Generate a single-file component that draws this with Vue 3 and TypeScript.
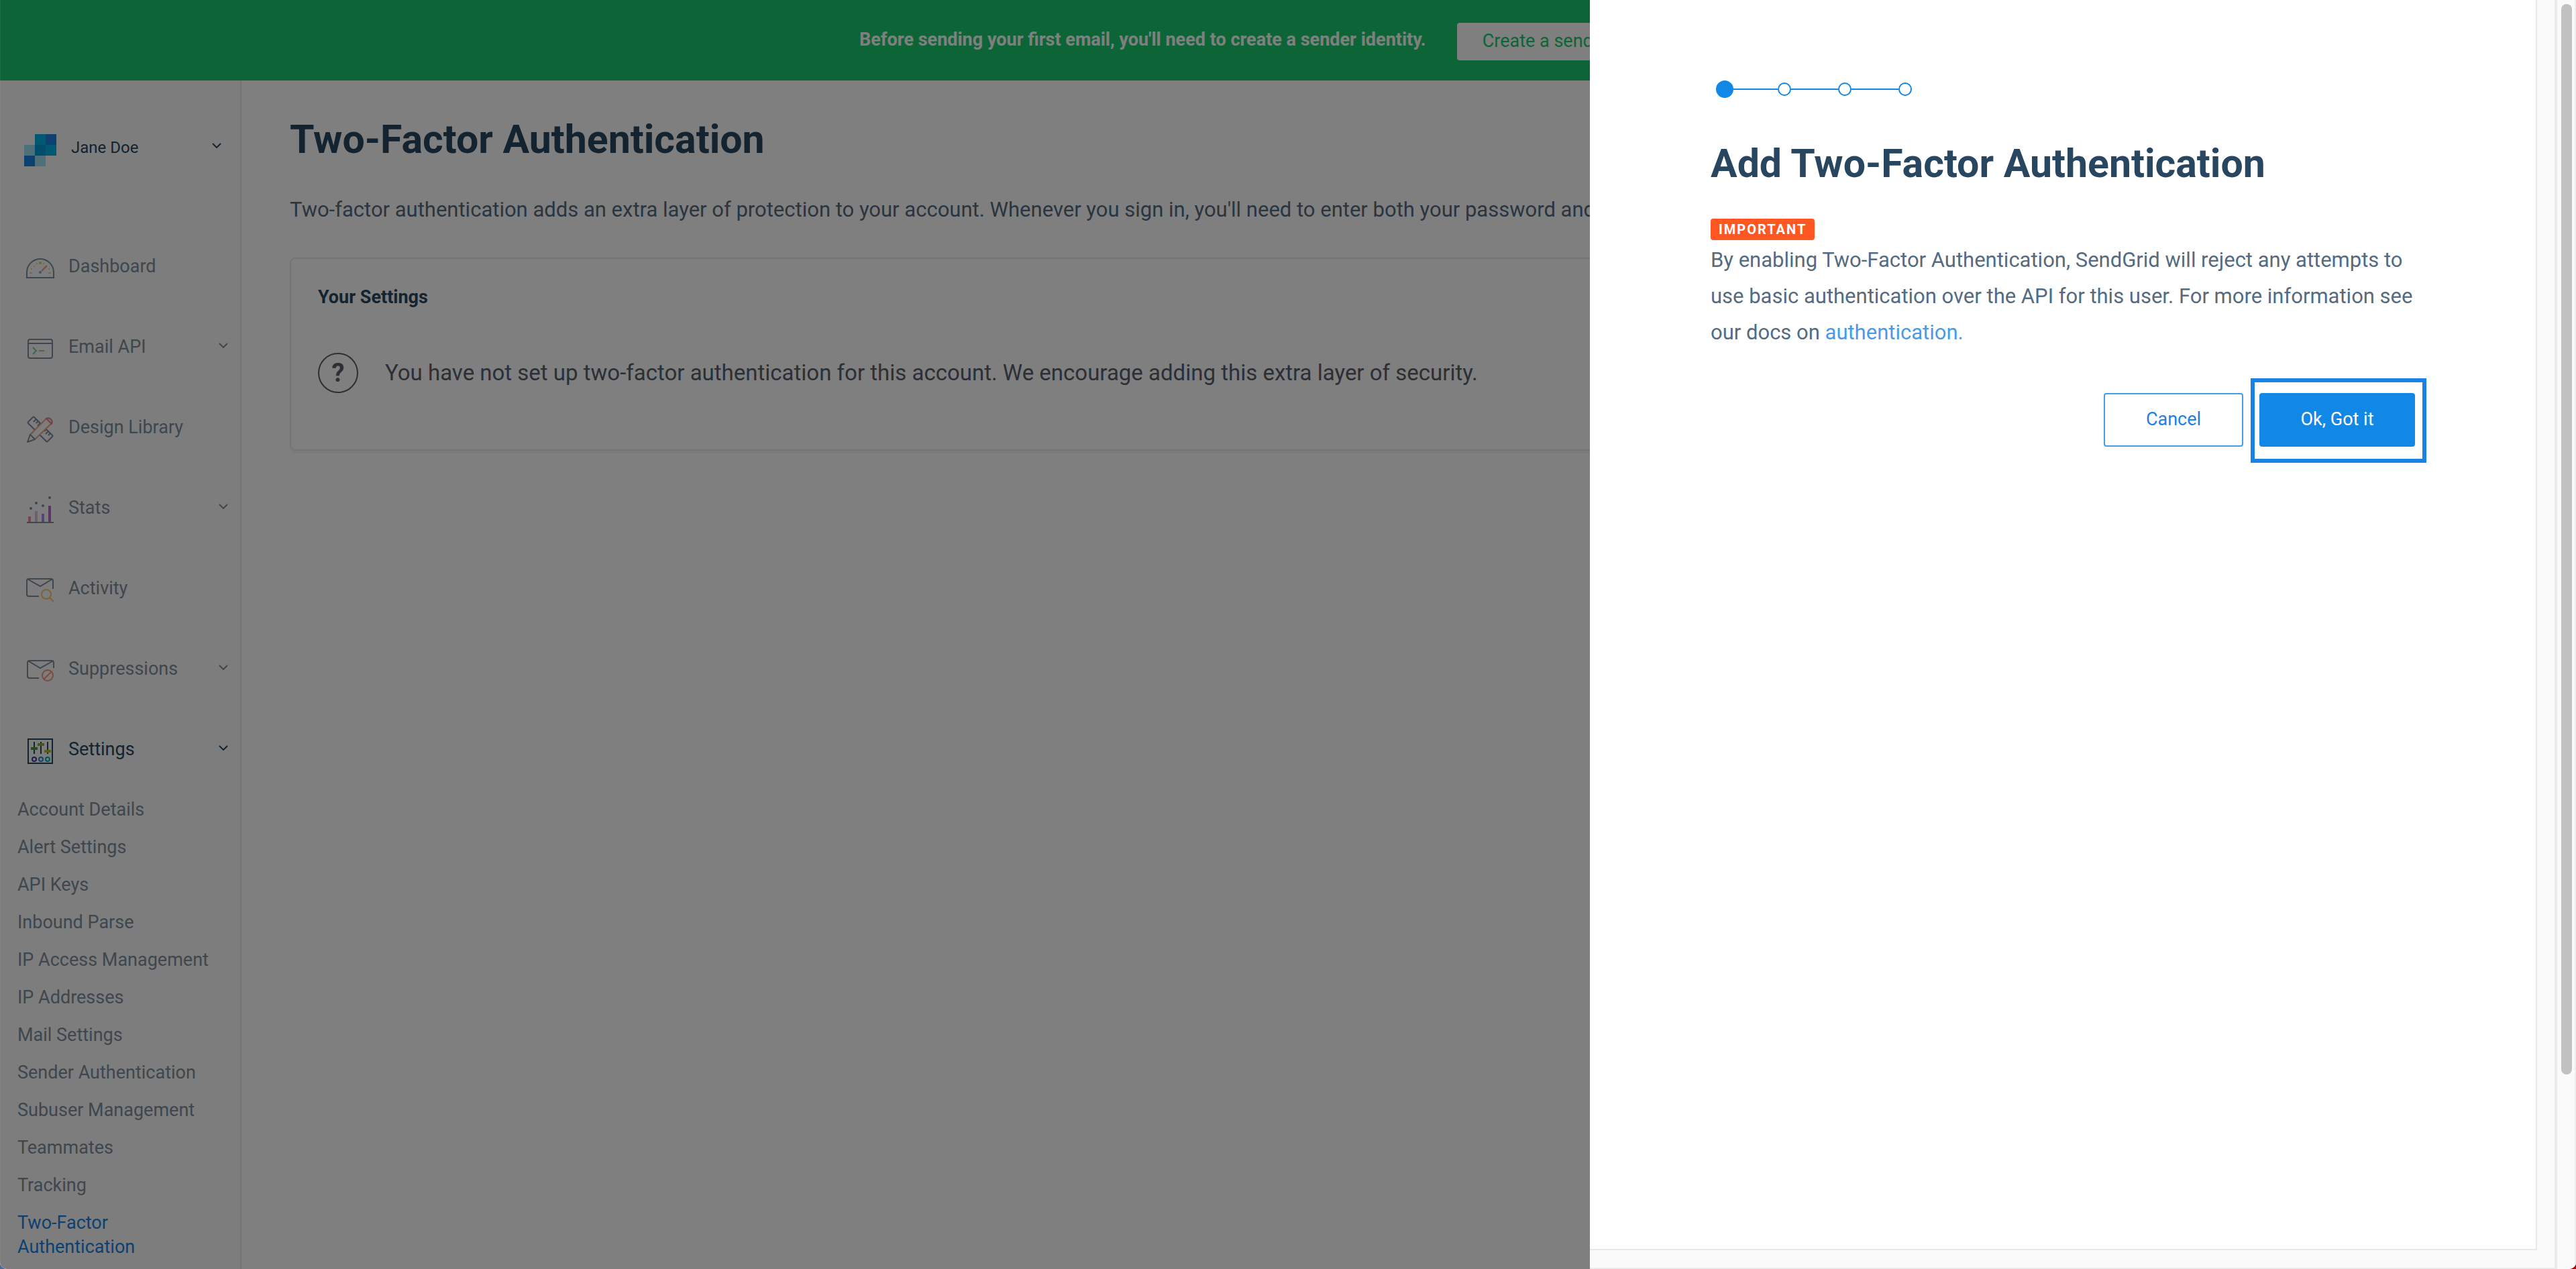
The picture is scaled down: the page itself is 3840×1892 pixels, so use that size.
<script setup lang="ts">
interface NavItem {
  id: string
  label: string
  expandable: boolean
}

const navItems: NavItem[] = [
  { id: 'dashboard', label: 'Dashboard', expandable: false },
  { id: 'email', label: 'Email API', expandable: true },
  { id: 'design', label: 'Design Library', expandable: false },
  { id: 'stats', label: 'Stats', expandable: true },
  { id: 'activity', label: 'Activity', expandable: false },
  { id: 'suppressions', label: 'Suppressions', expandable: true },
  { id: 'settings', label: 'Settings', expandable: true },
]

const activeItem = 'settings'

const settingsLinks: string[] = [
  'Account Details',
  'Alert Settings',
  'API Keys',
  'Inbound Parse',
  'IP Access Management',
  'IP Addresses',
  'Mail Settings',
  'Sender Authentication',
  'Subuser Management',
  'Teammates',
  'Tracking',
  'Two-Factor Authentication',
]

const activeLink = 'Two-Factor Authentication'

const steps = [1, 2, 3, 4]
const currentStep = 1
</script>

<template>
  <div class="window">
    <div class="page">
      <div class="banner">
        <strong class="banner-text">Before sending your first email, you'll need to create a sender identity.</strong>
        <button type="button" class="banner-button">Create a sender identity</button>
      </div>

      <div class="body">
        <aside class="sidebar">
          <button type="button" class="account">
            <svg class="logo" viewBox="0 0 48 48" aria-hidden="true" shape-rendering="crispEdges">
              <path fill="#9de1f3" d="M0 16h16v16H0zM16 32h16v16H16z" />
              <path fill="#1a82e2" d="M0 32h16v16H0zM32 0h16v16H32z" />
              <path fill="#00b3e3" d="M16 0h16v16H16zM32 16h16v16H32z" />
              <path fill="#009dd9" d="M16 16h16v16H16z" />
            </svg>
            <span class="account-name">Jane Doe</span>
            <svg class="chevron" viewBox="0 0 14 8" aria-hidden="true"><path d="M1 1l6 6 6-6" /></svg>
          </button>

          <nav class="nav" aria-label="Main">
            <component
              :is="item.expandable ? 'button' : 'a'"
              v-for="item in navItems"
              :key="item.id"
              class="nav-row"
              :class="{ active: item.id === activeItem }"
              :href="item.expandable ? undefined : '#'"
              :type="item.expandable ? 'button' : undefined"
            >
              <svg class="nav-icon" viewBox="0 0 44 44" aria-hidden="true">
                <g v-if="item.id === 'dashboard'">
                  <path class="ink" d="M2 36V28a20 20 0 0 1 40 0v8z" />
                  <g fill="#d9ae1c">
                    <circle cx="22" cy="14" r="2" />
                    <circle cx="17" cy="15" r="1" />
                    <circle cx="27" cy="15" r="1" />
                    <circle cx="13" cy="19" r="1" />
                    <circle cx="9" cy="23" r="1" />
                    <circle cx="35" cy="23" r="1" />
                    <rect x="6" y="28" width="4" height="2" rx="1" />
                    <rect x="34" y="28" width="4" height="2" rx="1" />
                  </g>
                  <path d="M24 26l8-8" stroke="#f2512e" stroke-width="2" />
                  <circle cx="22" cy="28" r="2" fill="#1a82e2" />
                </g>
                <g v-else-if="item.id === 'email'">
                  <rect class="ink" x="4" y="8" width="36" height="28" rx="3" />
                  <path class="ink" d="M4 14h36" />
                  <path d="M11 20l5 5-5 5" fill="none" stroke="#12b35c" stroke-width="2" />
                  <path d="M20 25h8" stroke="#6fae3a" stroke-width="2" />
                </g>
                <g v-else-if="item.id === 'design'" stroke-linejoin="round">
                  <path class="ink thin" d="M14 23L4 13q-1-1 0-2l7-7q1-1 2 0l10 10M21 30l10 10q1 1 2 0l7-7q1-1 0-2L31 22" />
                  <path class="ink thin" d="M16 7l-4 4M19 10l-3 3M22 13l-4 4M34 25l-4 4M31 22l-3 3M37 28l-3 3" />
                  <path d="M7 30L31 6M14 37L39 13" stroke="#f2663a" stroke-width="2" fill="none" />
                  <path d="M31 6a6 6 0 0 1 8 8z" fill="none" stroke="#d12f3f" stroke-width="2" />
                  <path class="ink thin" d="M7 30l-4 11 11-4z" />
                </g>
                <g v-else-if="item.id === 'stats'">
                  <path class="ink" d="M2 41h40" />
                  <path fill="#f23a66" d="M4 32h4v8H4z" />
                  <path fill="#cf95c8" d="M14 24h4v16h-4z" />
                  <path fill="#7548f0" d="M24 28h4v12h-4z" />
                  <path fill="#8511a8" d="M34 16h4v24h-4z" />
                  <g class="ink-fill">
                    <circle cx="8" cy="20" r="2" />
                    <circle cx="16" cy="12" r="2" />
                    <circle cx="26" cy="16" r="2" />
                    <circle cx="36" cy="4" r="2" />
                  </g>
                </g>
                <g v-else-if="item.id === 'activity'">
                  <path class="ink" d="M20 31H5q-3 0-3-3V8q0-3 3-3h33q3 0 3 3v12M4 6l18 10L39 6" />
                  <circle cx="31" cy="28" r="7" fill="none" stroke="#f7a21b" stroke-width="2" />
                  <path d="M36 33l6 6" stroke="#f7a21b" stroke-width="2" />
                </g>
                <g v-else-if="item.id === 'suppressions'">
                  <path class="ink" d="M20 33H6q-3 0-3-3V10q0-3 3-3h33q3 0 3 3v8M5 8l17 10L40 8" />
                  <circle cx="33" cy="29" r="8" fill="none" stroke="#f2512e" stroke-width="2" />
                  <path d="M27 35l12-12" stroke="#f2512e" stroke-width="2" />
                </g>
                <g v-else>
                  <rect class="ink" x="4" y="4" width="36" height="36" />
                  <path class="ink" d="M13 8v18M23 8v18M33 8v18" />
                  <path fill="#3c9a3c" d="M8 16h10v4H8z" />
                  <path fill="#80b030" d="M18 10h10v4H18z" />
                  <path fill="#b4be22" d="M28 20h10v4H28z" />
                  <g fill="none" stroke-width="2">
                    <circle cx="13" cy="34" r="3" stroke="#4637a0" />
                    <circle cx="23" cy="34" r="3" stroke="#2a86dc" />
                    <circle cx="33" cy="34" r="3" stroke="#00aebb" />
                  </g>
                </g>
              </svg>
              <span>{{ item.label }}</span>
              <svg v-if="item.expandable" class="chevron" viewBox="0 0 14 8" aria-hidden="true">
                <path d="M1 1l6 6 6-6" />
              </svg>
            </component>

            <ul class="sub-list">
              <li v-for="link in settingsLinks" :key="link">
                <a href="#" class="sub-link" :class="{ current: link === activeLink }">{{ link }}</a>
              </li>
            </ul>
          </nav>
        </aside>

        <main class="main">
          <h1 class="title">Two-Factor Authentication</h1>
          <p class="intro">
            Two-factor authentication adds an extra layer of protection to your account. Whenever you sign in, you'll
            need to enter both your password and
          </p>
          <section class="card">
            <h2 class="card-title">Your Settings</h2>
            <div class="status">
              <span class="status-mark">?</span>
              <p class="status-text">
                You have not set up two-factor authentication for this account. We encourage adding this extra layer of
                security.
              </p>
            </div>
          </section>
        </main>
      </div>
    </div>

    <div class="track"><div class="thumb"></div></div>
    <div class="overlay"></div>

    <div class="drawer" role="dialog" aria-labelledby="drawer-title">
      <div class="drawer-content">
        <ol class="stepper">
          <li v-for="step in steps" :key="step" class="step" :class="{ current: step === currentStep }"></li>
        </ol>
        <h2 id="drawer-title" class="title">Add Two-Factor Authentication</h2>
        <span class="badge">IMPORTANT</span>
        <p class="drawer-text">
          By enabling Two-Factor Authentication, SendGrid will reject any attempts to use basic authentication over the
          API for this user. For more information see our docs on <a href="#">authentication.</a>
        </p>
        <div class="actions">
          <button type="button" class="button secondary">Cancel</button>
          <button type="button" class="button primary">Ok, Got it</button>
        </div>
      </div>
    </div>
  </div>
</template>

<style>
body {
  background: linear-gradient(90deg, #4a679c 50%, #b80000 50%);
}
</style>

<style scoped>
.window {
  position: relative;
  display: flex;
  height: 100vh;
  overflow: hidden;
  border-radius: 0 0 10px 10px;
  background: #fff;
  color: #294661;
  font: 27px/36px Roboto, "Liberation Sans", sans-serif;
}

.window *,
.window *::before,
.window *::after {
  box-sizing: border-box;
}

button {
  margin: 0;
  padding: 0;
  border: 0;
  background: none;
  color: inherit;
  font: inherit;
  text-align: left;
  cursor: pointer;
}

a {
  color: inherit;
  text-decoration: none;
}

h1,
h2,
p,
ul,
ol {
  margin: 0;
  padding: 0;
  list-style: none;
}

.page {
  flex: 1;
  min-width: 0;
  display: flex;
  flex-direction: column;
}

/* Banner */
.banner {
  display: flex;
  justify-content: center;
  align-items: center;
  gap: 46px;
  padding: 34px 0 30px;
  background: #1aca6e;
  color: #fff;
}

.banner-text {
  padding-bottom: 6px;
}

.banner-button {
  height: 56px;
  padding: 0 38px 2px;
  border-radius: 4px;
  background: #fff;
  color: #1aca6e;
}

/* Sidebar */
.body {
  flex: 1;
  min-height: 0;
  display: flex;
}

.sidebar {
  flex: none;
  width: 360px;
  padding-top: 80px;
  border-right: 2px solid #eaeaea;
  background: #fafafa;
}

.account {
  display: flex;
  align-items: center;
  width: 100%;
  margin-bottom: 89px;
  padding: 0 28px 0 36px;
  font-size: 24px;
}

.logo {
  width: 48px;
  height: 48px;
  margin-right: 22px;
}

.account-name {
  padding-bottom: 8px;
}

.account .chevron {
  margin-bottom: 14px;
}

.chevron {
  width: 14px;
  height: 8px;
  margin: 0 0 5px auto;
  fill: none;
  stroke: #294661;
  stroke-width: 2;
}

.nav-row {
  display: flex;
  align-items: center;
  width: 100%;
  height: 120px;
  padding: 0 18px 0 38px;
  opacity: 0.6;
}

.nav-row.active {
  opacity: 1;
}

.nav-icon {
  width: 44px;
  height: 44px;
  margin: 6px 20px 0 0;
}

.ink {
  fill: none;
  stroke: #294661;
  stroke-width: 2;
}

.ink-fill {
  fill: #294661;
}

.sub-list {
  padding-top: 2px;
}

.sub-link {
  display: block;
  padding: 10px 26px;
  color: #7d8e9e;
}

.sub-link.current {
  color: #1a82e2;
}

/* Main column */
.main {
  flex: 1;
  min-width: 0;
  padding: 52px 72px 0;
}

.title {
  font-size: 59px;
  font-weight: 700;
  line-height: 72px;
}

.intro {
  margin-top: 42px;
  color: #546b81;
  font-size: 31px;
  line-height: 54px;
}

.card {
  margin-top: 44px;
  padding: 37px 40px 84px;
  border: 2px solid #e9e9ea;
  border-radius: 8px;
  box-shadow: 0 4px 0 #f6f6f6;
}

.card-title {
  margin-bottom: 63px;
  font-size: 27px;
  font-weight: 700;
  line-height: 40px;
}

.status {
  display: flex;
  align-items: center;
  gap: 40px;
  color: #585e6c;
}

.status-mark {
  display: flex;
  flex: none;
  justify-content: center;
  align-items: center;
  width: 60px;
  height: 60px;
  border: 2px solid currentColor;
  border-radius: 50%;
  font-size: 38px;
  font-weight: 700;
}

.status-text {
  font-size: 33px;
}

/* Window scrollbar */
.track {
  flex: none;
  width: 28px;
  padding: 6px 4px 8px 6px;
  border-right: 2px solid #eee;
  background: #fafafa;
}

.thumb {
  height: 85%;
  border-radius: 8px;
  background: #c1c1c1;
}

.overlay {
  position: absolute;
  inset: 0 28px 0 0;
  border-left: 1px solid rgba(255, 255, 255, 0.05);
  background: rgba(0, 0, 0, 0.5);
}

/* Drawer */
.drawer {
  position: absolute;
  top: 0;
  right: 28px;
  bottom: 0;
  width: 1442px;
  max-width: 100%;
  padding: 0 26px 26px 0;
  border: solid #ebebeb;
  border-width: 0 4px 2px 0;
  background: #fafafa;
}

.drawer-content {
  height: 100%;
  padding: 120px 180px 0;
  border: solid #e8e8e8;
  border-width: 0 2px 2px 0;
  background: #fff;
}

.stepper {
  display: flex;
  align-items: center;
  margin: 0 0 62px 8px;
}

.step {
  display: flex;
  align-items: center;
}

.step::before {
  content: "";
  width: 20px;
  height: 20px;
  border: 2px solid #1188e6;
  border-radius: 50%;
}

.step.current::before {
  width: 26px;
  height: 26px;
  background: #1188e6;
}

.step:not(:last-child)::after {
  content: "";
  width: 70px;
  height: 2px;
  background: #1188e6;
}

.step.current::after {
  width: 66px;
}

.badge {
  display: block;
  width: fit-content;
  margin: 46px 0 3px;
  padding: 0 12px;
  border-radius: 4px;
  background: #ff5722;
  color: #fff;
  font-size: 20px;
  font-weight: 700;
  letter-spacing: 2px;
  line-height: 32px;
}

.drawer-text {
  color: #546b81;
  font-size: 31px;
  line-height: 54px;
}

.drawer-text a {
  color: #489be8;
}

.actions {
  display: flex;
  justify-content: flex-end;
  gap: 24px;
  margin-top: 63px;
}

.button {
  position: relative;
  height: 80px;
  padding-bottom: 2px;
  border-radius: 4px;
  text-align: center;
}

.secondary {
  width: 208px;
  border: 2px solid #489be8;
  color: #1a82e2;
}

.primary {
  width: 232px;
  background: #1188e6;
  color: #fff;
}

/* Highlight frame around the primary action */
.primary::after {
  content: "";
  position: absolute;
  inset: -22px -17px -24px -13px;
  border: 6px solid #1a82e2;
}
</style>
